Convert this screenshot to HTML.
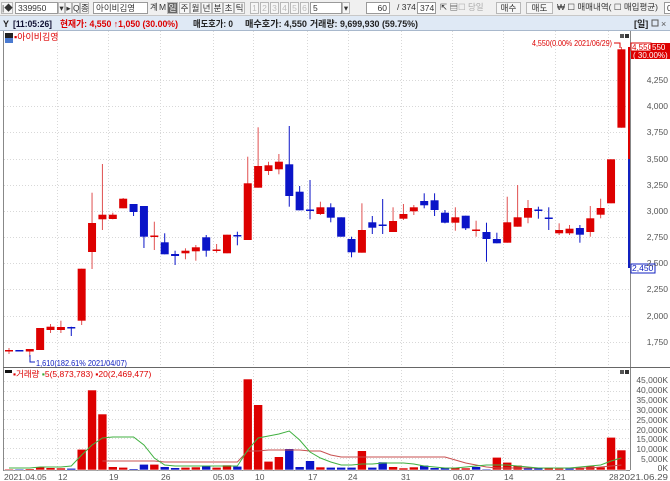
<!DOCTYPE html>
<html><head><meta charset="utf-8">
<style>
*{margin:0;padding:0;box-sizing:border-box}
body{width:670px;height:481px;overflow:hidden;background:#fff;font-family:"Liberation Sans","Noto Sans CJK KR",sans-serif;font-size:9px;position:relative}
.tb{position:absolute;left:0;top:0;width:670px;height:16px;background:#f0f0f0;border-bottom:1px solid #c8c8c8}
.tb span{position:absolute;top:2px;height:12px;line-height:11px;font-size:8.5px;color:#333;white-space:nowrap}
.box{border:1px solid #9a9a9a;background:#fff;padding-left:2px}
.btn{border:1px solid #b8b8b8;background:#f6f6f6;text-align:center}
.dis{color:#bbb!important}
.info{position:absolute;left:0;top:16px;width:670px;height:15px;background:#dfe9f5;border-bottom:1px solid #a8b8cc}
#c{position:absolute;left:0;top:0}
</style></head><body>
<div class="tb">
<span class="btn" style="left:1px;width:12px">|◆</span>
<span class="box" style="left:15px;width:43px">339950</span>
<span class="btn" style="left:58px;width:7px">▾</span>
<span class="btn" style="left:65px;width:7px">▸</span>
<span class="btn" style="left:72px;width:8px">Q</span>
<span class="btn" style="left:80px;width:9px">종</span>
<span class="box" style="left:93px;width:55px">아이비김영</span>
<span style="left:150px">계</span><span style="left:159px">M</span>
<span class="btn" style="left:167px;width:11px;background:#666;color:#fff">일</span>
<span class="btn" style="left:179px;width:11px">주</span>
<span class="btn" style="left:190px;width:11px">월</span>
<span class="btn" style="left:201px;width:11px">년</span>
<span class="btn" style="left:212px;width:11px">분</span>
<span class="btn" style="left:223px;width:11px">초</span>
<span class="btn" style="left:234px;width:11px">틱</span>
<span class="btn dis" style="left:250px;width:9px">1</span>
<span class="btn dis" style="left:260px;width:9px">2</span>
<span class="btn dis" style="left:270px;width:9px">3</span>
<span class="btn dis" style="left:280px;width:9px">4</span>
<span class="btn dis" style="left:290px;width:9px">5</span>
<span class="btn dis" style="left:300px;width:9px">6</span>
<span class="box" style="left:310px;width:32px">5</span>
<span class="btn" style="left:342px;width:8px">▾</span>
<span class="box" style="left:366px;width:24px;text-align:right;padding-right:2px">60</span>
<span style="left:397px">/ 374</span>
<span class="box" style="left:417px;width:19px">374</span>
<span style="left:440px">⇱ ▤</span>
<span style="left:458px;color:#aaa">☐ 당일</span>
<span class="btn" style="left:496px;width:25px">매수</span>
<span class="btn" style="left:526px;width:27px">매도</span>
<span style="left:557px">₩ ☐ 매매내역( ☐ 매입평균)</span>
<span class="box" style="left:664px;width:8px">00</span>
</div>
<div class="info"></div>
<svg id="c" width="670" height="481" xmlns="http://www.w3.org/2000/svg" font-family="Liberation Sans, Noto Sans CJK KR, sans-serif" font-size="9">
<g font-weight="bold" font-size="9" lengthAdjust="spacingAndGlyphs">
<text x="3" y="27" fill="#222">Y</text>
<text x="13" y="27" fill="#113" textLength="39" lengthAdjust="spacingAndGlyphs">[11:05:26]</text>
<text x="60" y="27" fill="#d00" textLength="118" lengthAdjust="spacingAndGlyphs">현재가: 4,550 ↑1,050 (30.00%)</text>
<text x="193" y="27" fill="#222" textLength="40" lengthAdjust="spacingAndGlyphs">매도호가: 0</text>
<text x="245" y="27" fill="#222" textLength="62" lengthAdjust="spacingAndGlyphs">매수호가: 4,550</text>
<text x="310" y="27" fill="#222" textLength="108" lengthAdjust="spacingAndGlyphs">거래량: 9,699,930 (59.75%)</text>
<text x="634" y="27" fill="#222">[일]</text>
</g>
<rect x="652" y="20" width="6" height="6" fill="none" stroke="#555"/>
<text x="661" y="27" fill="#555">×</text>
<g id="grid" stroke="#d8d8d8" stroke-dasharray="1,2" stroke-width="1"></g>
<line x1="3.5" y1="31" x2="3.5" y2="470" stroke="#888"/>
<line x1="630.5" y1="31" x2="630.5" y2="470" stroke="#888"/>
<line x1="3" y1="367.5" x2="670" y2="367.5" stroke="#666"/>
<line x1="3" y1="470.5" x2="630" y2="470.5" stroke="#888"/>
<g id="vol"></g>
<g id="cd"></g>
<polyline id="ma20" fill="none" stroke="#c85050" stroke-width="1"/>
<polyline id="ma5" fill="none" stroke="#40b040" stroke-width="1"/>
<line x1="629" y1="47" x2="629" y2="159" stroke="#d00" stroke-width="2"/>
<line x1="629" y1="159" x2="629" y2="268" stroke="#1020c0" stroke-width="2"/>
<rect x="5" y="33" width="8" height="5" fill="#222"/>
<rect x="5" y="38" width="8" height="5" fill="#4a7ad0"/>
<text x="14" y="40" fill="#d00">▪아이비김영</text>
<text x="532" y="46" fill="#d00" font-size="8.5" textLength="80" lengthAdjust="spacingAndGlyphs">4,550(0.00% 2021/06/29)</text>
<path d="M614 43h6v5" stroke="#d00" fill="none"/>
<rect x="631" y="43" width="39" height="8" fill="#d00"/>
<rect x="631" y="43" width="20" height="8" fill="#fff" stroke="#d00"/>
<text x="632" y="50" fill="#d00" font-size="8">4,550</text>
<text x="652" y="50" fill="#fff" font-size="8">550</text>
<rect x="631" y="51" width="39" height="8" fill="#d00"/>
<text x="633" y="58" fill="#fff" font-size="8">( 30.00%)</text>
<rect x="631" y="264" width="24" height="9" fill="#fff" stroke="#1020c0"/>
<text x="632" y="271" fill="#1020c0" font-size="8.5">2,450</text>
<path d="M30 355v7h5" stroke="#1020c0" fill="none"/>
<text x="36" y="366" fill="#1020c0" font-size="8.5" textLength="91" lengthAdjust="spacingAndGlyphs">1,610(182.61% 2021/04/07)</text>
<rect x="620" y="34" width="4" height="4" fill="#555"/><rect x="625" y="34" width="4" height="4" fill="#333"/>
<rect x="620" y="370" width="4" height="4" fill="#555"/><rect x="625" y="370" width="4" height="4" fill="#333"/>
<rect x="5" y="370" width="7" height="3" fill="#111"/>
<text x="13" y="377" fill="#d00" font-size="8.5">▪거래량 <tspan fill="#3a3">▪</tspan>5(5,873,783) ▪20(2,469,477)</text>
<g fill="#555" font-size="8.5" text-anchor="end">
<text x="668" y="83">4,250</text><text x="668" y="109">4,000</text><text x="668" y="135">3,750</text>
<text x="668" y="162">3,500</text><text x="668" y="188">3,250</text><text x="668" y="214">3,000</text>
<text x="668" y="240">2,750</text><text x="668" y="266">2,500</text><text x="668" y="292">2,250</text>
<text x="668" y="319">2,000</text><text x="668" y="345">1,750</text>
<text x="668" y="383">45,000K</text><text x="668" y="393">40,000K</text><text x="668" y="403">35,000K</text>
<text x="668" y="413">30,000K</text><text x="668" y="423">25,000K</text><text x="668" y="433">20,000K</text>
<text x="668" y="442">15,000K</text><text x="668" y="452">10,000K</text><text x="668" y="462">5,000K</text>
<text x="668" y="471">0K</text>
</g>
<g fill="#555" font-size="8.5">
<text x="4" y="480">2021.04.05</text><text x="58" y="480">12</text><text x="109" y="480">19</text>
<text x="161" y="480">26</text><text x="213" y="480">05.03</text><text x="255" y="480">10</text>
<text x="308" y="480">17</text><text x="348" y="480">24</text><text x="401" y="480">31</text>
<text x="453" y="480">06.07</text><text x="504" y="480">14</text><text x="556" y="480">21</text>
<text x="609" y="480">28</text><text x="619" y="480" textLength="49" lengthAdjust="spacingAndGlyphs">2021.06.29</text>
</g>
</svg>
<script>
var R="#dd0000",B="#0a14c8";
var C=[["r",350,351.5,348,354],["b",350,351.5,350,351.5],["r",349,351.5,349,357],["r",328,350,328,350],["r",326.7,330,324,333],["r",327,330,320.7,333],["b",327,328.5,326.7,336],["r",268.7,320.7,268.7,325],["r",223,252,192.7,269],["r",214.7,219.3,164,230],["r",214.7,219,212.7,219.3],["r",198.7,208.3,198,208.3],["b",204,212,204,216],["b",206,236.7,206,248],["r",235.5,236.5,221.7,250],["b",242.3,254.3,233.3,254.3],["b",254,256,250.7,265],["r",250.7,253.3,248.3,259.3],["r",247.3,251.3,245,260.7],["b",237.3,250.7,235,256.7],["r",249.5,250.5,244,252.7],["r",234.7,253.3,234.7,253.3],["b",235,236,231.7,245.3],["r",183.3,240,156.7,240],["r",166,187.7,127.3,187.7],["r",165.3,171,161.7,175],["r",161.7,169.3,154,174.3],["b",164.3,196,126,206.7],["b",191.7,210.3,186,210.3],["b",209.5,210.5,180,219.3],["r",207.3,214,201.7,215],["b",207.3,217.7,203.3,222.3],["b",217.3,236.7,217.3,236.7],["b",239,252.3,236.7,257.3],["r",230,252.7,203.3,252.7],["b",222.3,227.7,216,234],["b",224.5,226,199,234],["r",221,232,207.3,232],["r",214,218.7,204,220],["r",207.3,211.3,205,215],["b",201,205.3,193.3,208.3],["b",200.3,210,193.3,216],["b",212.7,222.7,210,223.3],["r",217.3,222.7,207.3,230.7],["b",215.7,228.3,215.7,230],["r",229.5,230.5,220.7,236.7],["b",232,239,222.7,261.7],["b",239,243.3,232.7,243.3],["r",222.3,242.7,196.7,242.7],["r",217.3,226.7,185,226.7],["r",208,217.7,200,223.3],["b",209.5,211,206.7,218.7],["b",217.5,219,207.3,230],["r",230,233.3,223.3,235],["r",228.7,233.3,225,235],["b",228,234.7,225,242.7],["r",218.3,232,206,236.7],["r",208,214.7,198.7,218.3],["r",159.3,203.3,159.3,203.3],["r",49.3,127.7,47,127.7]];
var V=[["r",469],["b",469],["r",468.7],["r",466.7],["r",467.7],["r",468],["b",468.3],["r",449.3],["r",390],["r",414],["r",466.7],["r",467.3],["b",468.7],["b",464.3],["r",464.3],["b",466.7],["b",467.7],["r",467.3],["r",467],["b",465.7],["r",467.3],["r",465],["b",466.3],["r",379],["r",404.7],["r",461.3],["r",456.7],["b",448.7],["b",466.7],["b",460.7],["r",467],["b",467.3],["b",467.3],["b",467.3],["r",450.7],["b",467.3],["b",462],["r",466.7],["r",468],["r",467],["b",465.3],["b",467.7],["b",467.7],["r",467.7],["r",468],["b",466.7],["b",469],["r",457.3],["r",462.3],["r",465.3],["b",467.3],["b",467.7],["r",467.7],["r",468.3],["b",468.3],["r",467.7],["r",466],["r",467],["r",437.3],["r",450]];
var X=function(i){return 9+10.38*i};
var s="";
C.forEach(function(c,i){var x=X(i),col=c[0]=="r"?R:B,wc=c[0]=="r"?"#e05050":B;
s+='<line x1="'+x+'" x2="'+x+'" y1="'+c[3]+'" y2="'+c[4]+'" stroke="'+wc+'"/>';
var h=Math.max(c[2]-c[1],1.5);s+='<rect x="'+(x-4)+'" y="'+c[1]+'" width="8" height="'+h+'" fill="'+col+'"/>';});
document.getElementById("cd").innerHTML=s;
s="";V.forEach(function(v,i){var x=X(i);var col=v[0]=="r"?R:B;s+='<rect x="'+(x-4.5)+'" y="'+v[1]+'" width="9" height="'+(470-v[1])+'" fill="'+col+'" stroke="#fff" stroke-width="0.6"/>';});
document.getElementById("vol").innerHTML=s;
var g="";[80,106,132,159,185,211,237,263,289,316,342,381,391,400,410,419,429,438,448,458].forEach(function(y){g+='<line x1="4" x2="630" y1="'+y+'.5" y2="'+y+'.5"/>';});
[57,108,160,213,253,307,348,401,452,503,555,608].forEach(function(x){g+='<line x1="'+x+'.5" x2="'+x+'.5" y1="31" y2="470"/>';});
document.getElementById("grid").innerHTML=g;
var m5=[468,468,468,467,467,467,466,455,445,438,437,437,437,445,458,465,466,466,466,466,466,466,466,450,438,436,434,431,440,452,458,462,465,465,464,464,463,463,463,464,466,467,468,468,467,466,465,465,465,466,467,468,468,468,468,467,466,465,461,458];
var m20=[null,null,null,null,null,null,null,null,null,461,461,461,461,461,461,462,462,462,462,462,462,462,462,451,451,450,450,450,450,451,451,455,457,457,457,457,457,457,457,457,457,457,457,460,463,465,467,468,468,468,468,468,468,468,468,468,468,467,466,465];
var p="";m5.forEach(function(y,i){p+=X(i)+","+y+" ";});document.getElementById("ma5").setAttribute("points",p);
p="";m20.forEach(function(y,i){if(y)p+=X(i)+","+y+" ";});document.getElementById("ma20").setAttribute("points",p);
</script>
</body></html>
